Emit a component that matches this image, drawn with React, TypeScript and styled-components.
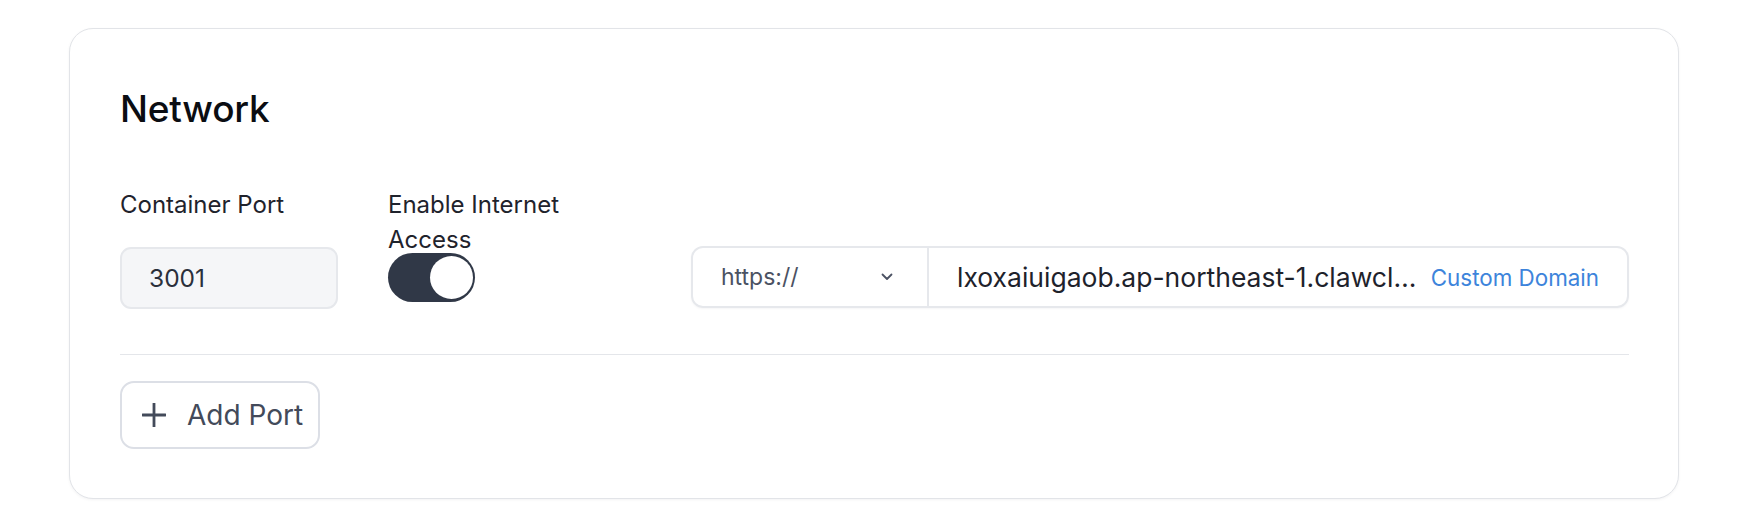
import React from "react";
import styled, { createGlobalStyle } from "styled-components";

const Global = createGlobalStyle`
  html, body { margin: 0; padding: 0; background: #ffffff; }
  body { font-family: Inter, "Noto Sans", "Liberation Sans", sans-serif; color: #1f2330; }
  * { box-sizing: border-box; }
`;

const Page = styled.div`
  padding: 28px 0 25px 69px;
`;

const Card = styled.section`
  width: 1610px;
  background: #ffffff;
  border: 1px solid #e2e4e8;
  border-radius: 24px;
  box-shadow: 0 1px 3px rgba(16, 24, 40, 0.05);
  padding: 57px 49px 49px 50px;
`;

const Title = styled.h2`
  margin: 0;
  font-size: 37px;
  line-height: 46px;
  font-weight: 500;
  color: #0b0d12;
  letter-spacing: -0.2px;
`;

const FieldsRow = styled.div`
  display: flex;
  align-items: flex-start;
  margin-top: 55px;
`;

const Field = styled.div<{ $width: number }>`
  display: flex;
  flex-direction: column;
  width: ${(p) => p.$width}px;
  flex: none;
  margin-right: 50px;
`;

const Label = styled.label`
  font-size: 24px;
  line-height: 35px;
  color: #1f232c;
`;

const PortInput = styled.div`
  margin-top: 25px;
  height: 62px;
  display: flex;
  align-items: center;
  padding-left: 27px;
  background: #f5f6f8;
  border: 2px solid #e6e8ec;
  border-radius: 11px;
  font-size: 24.5px;
  color: #2b303b;
`;

const Toggle = styled.div<{ $on: boolean }>`
  margin-top: -4px;
  width: 87px;
  height: 49px;
  border-radius: 25px;
  background: ${(p) => (p.$on ? "#303847" : "#d1d5db")};
  padding: 3px 2px 3px 3px;
  display: flex;
  justify-content: ${(p) => (p.$on ? "flex-end" : "flex-start")};
`;

const Knob = styled.span`
  width: 43px;
  height: 43px;
  border-radius: 50%;
  background: #ffffff;
`;

const UrlGroup = styled.div`
  align-self: flex-end;
  margin-left: auto;
  margin-bottom: 1px;
  width: 938px;
  height: 62px;
  display: flex;
  border: 2px solid #e6e8ec;
  border-radius: 12px;
  box-shadow: 0 1px 2px rgba(16, 24, 40, 0.04);
  overflow: hidden;
`;

const ProtocolSelect = styled.div`
  width: 236px;
  flex: none;
  display: flex;
  align-items: center;
  justify-content: space-between;
  padding: 0 34px 0 28px;
  border-right: 2px solid #e6e8ec;
  font-size: 23px;
  color: #4b5263;
`;

const HostBox = styled.div`
  flex: 1;
  min-width: 0;
  display: flex;
  align-items: center;
  padding: 0 28px 0 28px;
  gap: 8px;
`;

const HostText = styled.span`
  flex: 1;
  min-width: 0;
  font-size: 26.5px;
  color: #1e222b;
  white-space: nowrap;
  overflow: hidden;
  text-overflow: ellipsis;
`;

const DomainLink = styled.a`
  flex: none;
  font-size: 22.4px;
  color: #3d84db;
  text-decoration: none;
  cursor: pointer;
`;

const Divider = styled.hr`
  margin: 45px 0 0;
  border: none;
  border-top: 1.5px solid #e4e6ea;
`;

const AddButton = styled.button`
  margin-top: 26px;
  height: 68px;
  display: inline-flex;
  align-items: center;
  gap: 21px;
  padding: 0 15px 0 20px;
  background: #ffffff;
  border: 2px solid #dcdfe6;
  border-radius: 14px;
  font-family: inherit;
  font-size: 28px;
  color: #434a5a;
  cursor: pointer;
`;

const Chevron = () => (
  <svg width="12" height="8" viewBox="0 0 12 8" fill="none">
    <path d="M1.5 1.5L6 6L10.5 1.5" stroke="#4b5263" strokeWidth="1.8" strokeLinecap="round" strokeLinejoin="round" />
  </svg>
);

const PlusIcon = () => (
  <svg width="24" height="24" viewBox="0 0 24 24" fill="none">
    <path d="M12 0.5V23.5M0.5 12H23.5" stroke="#434a5a" strokeWidth="2.8" strokeLinecap="round" />
  </svg>
);

export default function App() {
  return (
    <>
      <Global />
      <Page>
        <Card>
          <Title>Network</Title>
          <FieldsRow>
            <Field $width={218}>
              <Label>Container Port</Label>
              <PortInput>3001</PortInput>
            </Field>
            <Field $width={190}>
              <Label>Enable Internet Access</Label>
              <Toggle $on={true}>
                <Knob />
              </Toggle>
            </Field>
            <UrlGroup>
              <ProtocolSelect>
                <span>https://</span>
                <Chevron />
              </ProtocolSelect>
              <HostBox>
                <HostText>lxoxaiuigaob.ap-northeast-1.clawcloudrun.com</HostText>
                <DomainLink>Custom Domain</DomainLink>
              </HostBox>
            </UrlGroup>
          </FieldsRow>
          <Divider />
          <AddButton>
            <PlusIcon />
            <span>Add Port</span>
          </AddButton>
        </Card>
      </Page>
    </>
  );
}
